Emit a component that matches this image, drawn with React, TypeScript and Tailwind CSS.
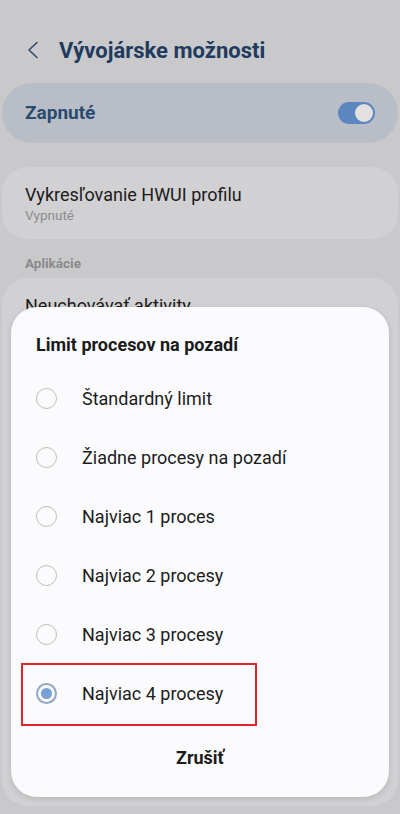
import React from 'react';

const options = [
  'Štandardný limit',
  'Žiadne procesy na pozadí',
  'Najviac 1 proces',
  'Najviac 2 procesy',
  'Najviac 3 procesy',
  'Najviac 4 procesy',
];

const Radio: React.FC<{ checked: boolean }> = ({ checked }) =>
  checked ? (
    <span className="w-[21px] h-[21px] rounded-full border-2 border-[#8fa7c6] flex items-center justify-center shrink-0">
      <span className="w-[11px] h-[11px] rounded-full bg-[#79a0d6]" />
    </span>
  ) : (
    <span className="w-[21px] h-[21px] rounded-full border-[1.5px] border-[#bcbcbc] shrink-0" />
  );

export default function App() {
  return (
    <div
      className="relative w-[400px] h-[814px] overflow-hidden bg-[#c9c9cb]"
      style={{ fontFamily: 'Roboto, "Noto Sans", sans-serif' }}
    >
      {/* header */}
      <div className="flex items-center h-[34px] mt-[33px] pl-[26px]">
        <svg width="14" height="18" viewBox="0 0 14 18" fill="none">
          <path d="M11 1.5 L3 9 L11 16.5" stroke="#2f4a68" strokeWidth="1.6" strokeLinecap="round" strokeLinejoin="round" />
        </svg>
        <span className="ml-[19px] text-[22px] font-bold text-[#1f3b5e]">Vývojárske možnosti</span>
      </div>

      {/* master switch */}
      <div className="mt-[16px] mx-[2px] h-[60px] rounded-full bg-[#b9bdc6] flex items-center justify-between pl-[23px] pr-[23px]">
        <span className="text-[19px] font-bold text-[#2b4a6f]">Zapnuté</span>
        <span className="w-[37px] h-[22px] rounded-full bg-[#5b86bf] flex items-center justify-end pr-[2px]">
          <span className="w-[18px] h-[18px] rounded-full bg-[#e3e1df]" />
        </span>
      </div>

      {/* HWUI */}
      <div className="mt-[24px] mx-[2px] h-[72px] rounded-[26px] bg-[#d1d1d3] flex flex-col justify-center px-[23px]">
        <span className="text-[18px] leading-[23px] text-[#1b1b1b]">Vykresľovanie HWUI profilu</span>
        <span className="text-[13.5px] leading-[18px] text-[#8b8b8d]">Vypnuté</span>
      </div>

      <div className="mt-[16px] px-[25px] text-[13.5px] leading-[16px] font-bold text-[#8a8a8c]">Aplikácie</div>

      <div className="mt-[7px] mx-[2px] h-[528px] rounded-[26px] bg-[#d1d1d3] px-[23px] pt-[17px]">
        <span className="text-[18px] leading-[22px] text-[#1b1b1b]">Neuchovávať aktivity</span>
      </div>

      {/* dialog */}
      <div className="absolute left-[11px] top-[307px] w-[378px] h-[490px] rounded-[26px] bg-[#fbfbfd] shadow-[0_2px_6px_rgba(0,0,0,0.12)] flex flex-col">
        <div className="pt-[26px] px-[25px] text-[18px] leading-[24px] font-bold text-[#1a1a1a]">
          Limit procesov na pozadí
        </div>
        <div className="mt-[12px] flex flex-col">
          {options.map((o, i) => (
            <div key={o} className="h-[59px] flex items-center px-[25px] gap-[25px]">
              <Radio checked={i === options.length - 1} />
              <span className="text-[18px] text-[#1c1c1c]">{o}</span>
            </div>
          ))}
        </div>
        <div className="h-[68px] flex items-center justify-center text-[18px] font-bold text-[#1a1a1a]">Zrušiť</div>
      </div>

      {/* highlight annotation */}
      <div className="absolute left-[21px] top-[663px] w-[236px] h-[63px] border-2 border-[#e0242a]" />
    </div>
  );
}
